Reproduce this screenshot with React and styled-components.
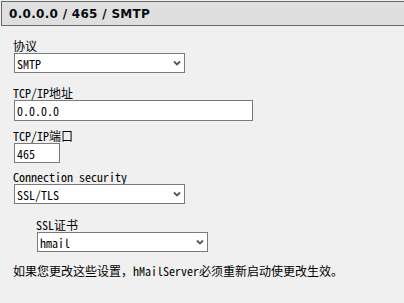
import styled, {createGlobalStyle} from "styled-components";

const GlobalStyle = createGlobalStyle`
    html, body {
        margin: 0;
        padding: 0;
        background: #f0f0f0;
    }
    body {
        width: 404px;
        height: 303px;
        overflow: hidden;
        font-family: "Noto Sans Mono CJK SC", "Noto Sans CJK SC", monospace;
        font-size: 12px;
        color: #000;
    }
`;

const Page = styled.div`
    display: flex;
    flex-direction: column;
    padding-top: 1px;
`;

const Header = styled.header`
    margin-left: 1px;
    height: 23px;
    display: flex;
    align-items: center;
    padding-left: 7px;
    background: #dfdfdf;
    border: 1px solid #696969;
    border-right: none;
    font-family: "DejaVu Sans", Verdana, sans-serif;
    font-weight: bold;
    font-size: 12px;
    letter-spacing: 0.3px;
    color: #0a0a14;
`;

const Form = styled.div`
    display: flex;
    flex-direction: column;
    padding: 0 0 0 14px;
`;

const Field = styled.div`
    display: flex;
    flex-direction: column;
    margin-top: ${(p) => p.$top}px;
    margin-left: ${(p) => p.$indent || 0}px;
`;

const Label = styled.div`
    height: 14px;
    line-height: 14px;
    margin-left: -1px;
    white-space: nowrap;
`;

const Box = styled.div`
    box-sizing: border-box;
    width: ${(p) => p.$width}px;
    height: ${(p) => p.$height || 20}px;
    background: #fff;
    border: 1px solid #7a7a7a;
    display: flex;
    align-items: center;
    padding: 0 3px 0 2px;
    white-space: nowrap;
`;

const Value = styled.span`
    flex: 1;
`;

const Note = styled.p`
    margin: 12px 0 0 -1px;
    line-height: 14px;
    white-space: nowrap;
`;

function Chevron() {
    return (
        <svg width="8" height="6" viewBox="0 0 8 6">
            <path d="M1 1.5 L4 4.5 L7 1.5" fill="none" stroke="#555" strokeWidth="1.8" />
        </svg>
    );
}

function Select({width, value}) {
    return (
        <Box $width={width}>
            <Value>{value}</Value>
            <Chevron />
        </Box>
    );
}

export default function App() {
    return (
        <>
            <GlobalStyle />
            <Page>
                <Header>0.0.0.0 / 465 / SMTP</Header>
                <Form>
                    <Field $top={13}>
                        <Label>协议</Label>
                        <Select width={171} value="SMTP" />
                    </Field>
                    <Field $top={13}>
                        <Label>TCP/IP地址</Label>
                        <Box $width={239} $height={21}>0.0.0.0</Box>
                    </Field>
                    <Field $top={8}>
                        <Label>TCP/IP端口</Label>
                        <Box $width={46}>465</Box>
                    </Field>
                    <Field $top={7}>
                        <Label>Connection security</Label>
                        <Select width={171} value="SSL/TLS" />
                    </Field>
                    <Field $top={14} $indent={23}>
                        <Label>SSL证书</Label>
                        <Select width={171} value="hmail" />
                    </Field>
                    <Note>如果您更改这些设置，hMailServer必须重新启动使更改生效。</Note>
                </Form>
            </Page>
        </>
    );
}
